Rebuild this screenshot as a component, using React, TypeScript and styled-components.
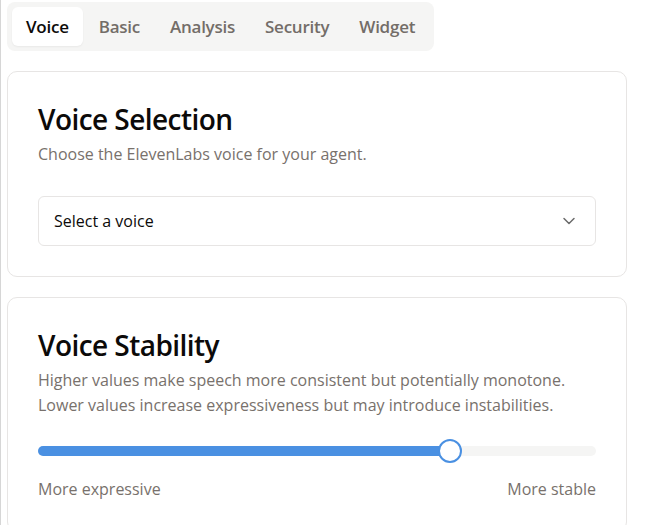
import React from "react";
import styled, { createGlobalStyle } from "styled-components";

const Global = createGlobalStyle`
  html, body { margin: 0; padding: 0; background: #ffffff; }
  body { font-family: "Open Sans", "Noto Sans", sans-serif; color: #0c0a09; }
  * { box-sizing: border-box; }
`;

const Page = styled.div`
  min-height: 525px;
  border-left: 1px solid #d6d6d6;
  padding: 2px 19px 0 6px;
  display: flex;
  flex-direction: column;
  align-items: flex-start;
  gap: 20px;
`;

const TabList = styled.div`
  display: flex;
  gap: 2px;
  padding: 5px;
  background: #f5f5f4;
  border-radius: 8px;
`;

const Tab = styled.button<{ $active?: boolean }>`
  font-family: inherit;
  font-size: 17px;
  font-weight: 600;
  letter-spacing: -0.25px;
  height: 39px;
  padding: 0 14px;
  border: none;
  border-radius: 6px;
  background: ${(p) => (p.$active ? "#ffffff" : "transparent")};
  color: ${(p) => (p.$active ? "#0c0a09" : "#736d68")};
  box-shadow: ${(p) => (p.$active ? "0 1px 2px rgba(0,0,0,0.05)" : "none")};
  cursor: pointer;
`;

const Card = styled.section`
  align-self: stretch;
  border: 1px solid #e7e5e4;
  border-radius: 10px;
  padding: 30px 30px 30px 30px;
  background: #fff;
  display: flex;
  flex-direction: column;
`;

const Title = styled.h2`
  margin: 0;
  font-size: 28px;
  line-height: 34px;
  font-weight: 600;
  letter-spacing: -0.55px;
  color: #0c0a09;
`;

const Description = styled.p`
  margin: 6px 0 0;
  font-size: 16px;
  line-height: 25px;
  color: #78716c;
`;

const Select = styled.button`
  margin-top: 29px;
  height: 50px;
  display: flex;
  align-items: center;
  justify-content: space-between;
  padding: 0 16px 0 15px;
  border: 1px solid #e7e5e4;
  border-radius: 6px;
  background: #fff;
  font-family: inherit;
  font-size: 16px;
  color: #0c0a09;
  cursor: pointer;
`;

const SliderTrack = styled.div`
  position: relative;
  margin-top: 28px;
  height: 10px;
  border-radius: 5px;
  background: #f5f5f4;
`;

const SliderFill = styled.div`
  height: 100%;
  border-radius: 5px;
  background: #4a90e2;
`;

const SliderThumb = styled.div`
  position: absolute;
  top: 50%;
  width: 24px;
  height: 24px;
  border-radius: 50%;
  border: 2px solid #4a90e2;
  background: #fff;
  transform: translate(-50%, -50%);
`;

const LabelRow = styled.div`
  margin-top: 21px;
  display: flex;
  justify-content: space-between;
  font-size: 16px;
  line-height: 24px;
  color: #78716c;
`;

const Chevron = () => (
  <svg width="20" height="20" viewBox="0 0 24 24" fill="none" stroke="#6b6b6b" strokeWidth="1.8" strokeLinecap="round" strokeLinejoin="round">
    <path d="m6 9 6 6 6-6" />
  </svg>
);

export default function App() {
  const value = 73.8;
  return (
    <>
      <Global />
      <Page>
        <TabList>
          <Tab $active>Voice</Tab>
          <Tab>Basic</Tab>
          <Tab>Analysis</Tab>
          <Tab>Security</Tab>
          <Tab>Widget</Tab>
        </TabList>
        <Card>
          <Title>Voice Selection</Title>
          <Description>Choose the ElevenLabs voice for your agent.</Description>
          <Select>
            <span>Select a voice</span>
            <Chevron />
          </Select>
        </Card>
        <Card>
          <Title>Voice Stability</Title>
          <Description>
            Higher values make speech more consistent but potentially monotone.
            <br />
            Lower values increase expressiveness but may introduce instabilities.
          </Description>
          <SliderTrack>
            <SliderFill style={{ width: `${value}%` }} />
            <SliderThumb style={{ left: `${value}%` }} />
          </SliderTrack>
          <LabelRow>
            <span>More expressive</span>
            <span>More stable</span>
          </LabelRow>
        </Card>
      </Page>
    </>
  );
}
